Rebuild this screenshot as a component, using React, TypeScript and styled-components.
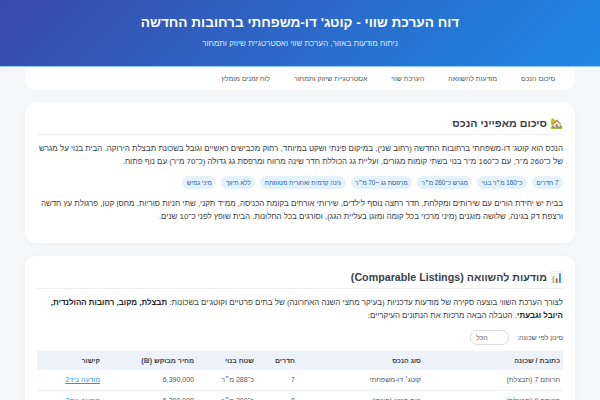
import { createGlobalStyle } from "styled-components";
import styled from "styled-components";

const GlobalStyle = createGlobalStyle`
  html, body {
    margin: 0;
    padding: 0;
    height: 400px;
    overflow: hidden;
    background: #f4f6f8;
    font-family: "Liberation Sans", sans-serif;
    color: #333;
  }
  * { box-sizing: border-box; }
`;

const Header = styled.header`
  height: 67px;
  padding-top: 13px;
  text-align: center;
  color: #fff;
  background: linear-gradient(135deg, #3949ab, #1e88e5);
  border-bottom: 1px solid #90caf9;
  h1 {
    margin: 0;
    font-size: 13.6px;
    line-height: 20px;
    font-weight: 700;
  }
  p {
    margin: 5px 0 0;
    font-size: 8px;
    line-height: 12px;
    color: #dbe9fb;
  }
`;

const Nav = styled.nav`
  width: 550px;
  height: 23px;
  margin: 0 auto;
  padding: 0 20px;
  display: flex;
  align-items: center;
  gap: 24px;
  background: #fff;
  border-radius: 0 0 10px 10px;
  font-size: 7px;
  color: #555;
`;

const Card = styled.section<{ $h: number }>`
  width: 550px;
  height: ${(p) => p.$h}px;
  margin: 12px auto 13px;
  padding: 13px 12px 12px;
  background: #fff;
  border-radius: 10px;
  box-shadow: 0 1px 4px rgba(0, 0, 0, 0.03);
`;

const Title = styled.h2`
  margin: 0 0 7px;
  padding-bottom: 3px;
  border-bottom: 1px solid #f0f1f3;
  font-size: 10.7px;
  line-height: 16px;
  font-weight: 700;
  color: #3a3f4a;
`;

const Para = styled.p`
  margin: 0;
  font-size: 7.95px;
  line-height: 13px;
  color: #3d3d3d;
  b { color: #222; }
`;

const Chips = styled.div`
  display: flex;
  flex-wrap: wrap;
  gap: 5px;
  margin: 8px 0;
`;

const Chip = styled.span`
  padding: 0 4.5px;
  height: 13px;
  line-height: 13px;
  border-radius: 7px;
  background: #e3f2fd;
  color: #1e5aa8;
  font-size: 6.3px;
`;

const Filter = styled.div`
  display: flex;
  align-items: center;
  gap: 8px;
  margin: 8px 0 6px;
  font-size: 7px;
  color: #555;
`;

const Select = styled.span`
  width: 39px;
  height: 15px;
  padding-left: 5px;
  line-height: 14px;
  text-align: left;
  border: 1px solid #dcdcdc;
  border-radius: 7px;
`;

const Table = styled.table`
  width: 526px;
  table-layout: fixed;
  border-collapse: collapse;
  font-size: 7px;
  th {
    height: 19px;
    padding: 0 3px;
    background: #eef2fb;
    color: #3a3f4a;
    text-align: right;
    font-weight: 700;
  }
  td {
    height: 20px;
    padding: 0 3px;
    border-bottom: 1px solid #f0f1f3;
    color: #555;
  }
  a { color: #3d8fdc; }
  th:nth-child(1) { width: 139px; }
  th:nth-child(2) { width: 126px; }
  th:nth-child(3) { width: 41px; }
  th:nth-child(4) { width: 60px; }
  th:nth-child(5) { width: 94px; }
  th:nth-child(6) { width: 66px; }
`;

const chips = [
  "7 חדרים",
  "כ־160 מ״ר בנוי",
  "מגרש כ־260 מ״ר",
  "מרפסת גג ~70 מ״ר",
  "גינה קדמית ואחורית מטופחת",
  "ללא תיווך",
  "מיני גמיש",
];

const rows = [
  ["חרותם 7 (תבצלת)", "קוטג׳ דו-משפחתי", "7", "כ־288 מ״ר", "6,390,000", "מודעה ביד2"],
  ["חרותם 9 (תבצלת)", "בית פרטי (פינתי)", "8", "כ־300 מ״ר", "6,200,000", "מודעה ביד2"],
];

export default function App() {
  return (
    <div dir="rtl">
      <GlobalStyle />
      <Header>
        <h1>דוח הערכת שווי - קוטג' דו-משפחתי ברחובות החדשה</h1>
        <p>ניתוח מודעות באזור, הערכת שווי ואסטרטגיית שיווק ותמחור</p>
      </Header>
      <Nav>
        <span>סיכום הנכס</span>
        <span>מודעות להשוואה</span>
        <span>הערכת שווי</span>
        <span>אסטרטגיית שיווק ותמחור</span>
        <span>לוח זמנים מומלץ</span>
      </Nav>
      <Card $h={141}>
        <Title>🏡 סיכום מאפייני הנכס</Title>
        <Para>
          הנכס הוא קוטג' דו-משפחתי ברחובות החדשה (רחוב שני), במיקום פינתי ושקט במיוחד, רחוק מכבישים ראשיים וגובל בשכונת תבצלת הירוקה. הבית בנוי על מגרש של כ־260 מ"ר, עם כ־160 מ"ר בנוי בשתי קומות מגורים, ועליית גג הכוללת חדר שינה מרווח ומרפסת גג גדולה (כ־70 מ"ר) עם נוף פתוח.
        </Para>
        <Chips>
          {chips.map((c) => (
            <Chip key={c}>{c}</Chip>
          ))}
        </Chips>
        <Para>
          בבית יש יחידת הורים עם שירותים ומקלחת, חדר רחצה נוסף לילדים, שירותי אורחים בקומת הכניסה, ממ"ד תקני, שתי חניות סוריות, מחסן קטן, פרגולת עץ חדשה ורצפת דק בגינה, שלושה מזגנים (מיני מרכזי בכל קומה ומזגן בעליית הגג), וסורגים בכל החלונות. הבית שופץ לפני כ־10 שנים.
        </Para>
      </Card>
      <Card $h={200}>
        <Title>📊 מודעות להשוואה (Comparable Listings)</Title>
        <Para>
          לצורך הערכת השווי בוצעה סקירה של מודעות עדכניות (בעיקר מחצי השנה האחרונה) של בתים פרטיים וקוטג'ים בשכונות: <b>תבצלת, מקוב, רחובות ההולנדית, היובל וגבעתי</b>. הטבלה הבאה מרכזת את הנתונים העיקריים:
        </Para>
        <Filter>
          <span>סינון לפי שכונה:</span>
          <Select>הכל</Select>
        </Filter>
        <Table>
          <thead>
            <tr>
              <th>כתובת / שכונה</th>
              <th>סוג הנכס</th>
              <th>חדרים</th>
              <th>שטח בנוי</th>
              <th>מחיר מבוקש (₪)</th>
              <th>קישור</th>
            </tr>
          </thead>
          <tbody>
            {rows.map((r) => (
              <tr key={r[0]}>
                <td>{r[0]}</td>
                <td>{r[1]}</td>
                <td>{r[2]}</td>
                <td>{r[3]}</td>
                <td>{r[4]}</td>
                <td>
                  <a href="#">{r[5]}</a>
                </td>
              </tr>
            ))}
          </tbody>
        </Table>
      </Card>
    </div>
  );
}
